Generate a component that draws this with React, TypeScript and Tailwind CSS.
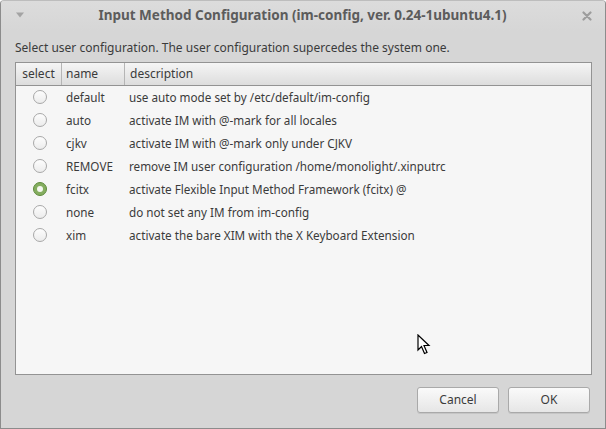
import React from "react";

const rows = [
  ["default", "use auto mode set by /etc/default/im-config", false],
  ["auto", "activate IM with @-mark for all locales", false],
  ["cjkv", "activate IM with @-mark only under CJKV", false],
  ["REMOVE", "remove IM user configuration /home/monolight/.xinputrc", false],
  ["fcitx", "activate Flexible Input Method Framework (fcitx) @", true],
  ["none", "do not set any IM from im-config", false],
  ["xim", "activate the bare XIM with the X Keyboard Extension", false],
] as const;

function Radio({ on }: { on: boolean }) {
  if (on) {
    return (
      <div className="w-[14px] h-[14px] rounded-full bg-[#84ad5f] border border-[#5e8b3c] flex items-center justify-center">
        <div className="w-[6px] h-[6px] rounded-full bg-[#f4f7f0]" />
      </div>
    );
  }
  return (
    <div className="w-[14px] h-[14px] rounded-full border border-[#a8a8a8] bg-gradient-to-b from-[#fdfdfd] to-[#ececec]" />
  );
}

export default function App() {
  return (
    <div
      className="relative w-[606px] h-[429px] bg-[#d6d6d6] border border-[#8c8c8c] border-t-[#bdbdbd] rounded-t-[4px] flex flex-col overflow-hidden"
      style={{ fontFamily: '"Noto Sans", "Open Sans", sans-serif' }}
    >
      {/* title bar */}
      <div className="h-[30px] flex items-center pl-[12px] pr-[12px] bg-gradient-to-b from-[#dcdcdc] to-[#d6d6d6]">
        <svg width="10" height="6" viewBox="0 0 10 6" className="ml-[2px] mt-[-2px]">
          <path d="M1 0.5 L9 0.5 L5 5.5 Z" fill="#a3a3a3" />
        </svg>
        <div className="flex-1 text-center text-[13.5px] font-bold text-[#5c5c5c] leading-none pr-[2px]">
          Input Method Configuration (im-config, ver. 0.24-1ubuntu4.1)
        </div>
        <svg width="10" height="10" viewBox="0 0 10 10" className="mr-[1px]">
          <path d="M1.5 1.5 L8.5 8.5 M8.5 1.5 L1.5 8.5" stroke="#9d9d9d" strokeWidth="2.2" strokeLinecap="round" />
        </svg>
      </div>

      {/* content */}
      <div className="flex flex-col px-[14px] flex-1">
        <div className="text-[12px] text-[#3b3b3b] leading-none mt-[10px] h-[21px] pt-[1px]">
          Select user configuration. The user configuration supercedes the system one.
        </div>
        <div className="w-[577px] h-[313px] border border-[#939393] bg-[#f6f6f6] flex flex-col">
          <div className="h-[23px] flex border-b border-[#939393] bg-gradient-to-b from-[#f5f5f5] to-[#dddddd] text-[12px] text-[#3b3b3b]">
            <div className="w-[46px] border-r border-[#b5b5b5] flex items-center justify-center">select</div>
            <div className="w-[63px] border-r border-[#b5b5b5] flex items-center pl-[4px]">name</div>
            <div className="flex-1 flex items-center pl-[5px]">description</div>
          </div>
          {rows.map(([n, d, on]) => (
            <div key={n} className="h-[23px] flex items-center text-[11.7px] text-[#3b3b3b]">
              <div className="w-[46px] flex items-center justify-center pl-[1px] mt-[-1px]">
                <Radio on={on} />
              </div>
              <div className="w-[63px] pl-[4px]">{n}</div>
              <div className="flex-1 pl-[4px]">{d}</div>
            </div>
          ))}
        </div>
        <div className="flex justify-end gap-[9px] mt-[12px] pr-[1px]">
          <button className="w-[82px] h-[26px] rounded-[3px] border border-[#a9a9a9] bg-gradient-to-b from-[#fafafa] to-[#e6e6e6] text-[12px] text-[#3b3b3b] shadow-[0_1px_0_rgba(0,0,0,0.08)]">
            Cancel
          </button>
          <button className="w-[82px] h-[26px] rounded-[3px] border border-[#a9a9a9] bg-gradient-to-b from-[#fafafa] to-[#e6e6e6] text-[12px] text-[#3b3b3b] shadow-[0_1px_0_rgba(0,0,0,0.08)]">
            OK
          </button>
        </div>
      </div>

      {/* mouse cursor */}
      <svg className="absolute left-[416px] top-[333px]" width="14" height="22" viewBox="0 0 14 22">
        <path d="M1 1 L1 16 L4.5 12.5 L7.5 19.5 L10 18.5 L7 11.5 L12 11.5 Z" fill="#ffffff" stroke="#000000" strokeWidth="1.2" strokeLinejoin="miter" />
      </svg>
    </div>
  );
}
